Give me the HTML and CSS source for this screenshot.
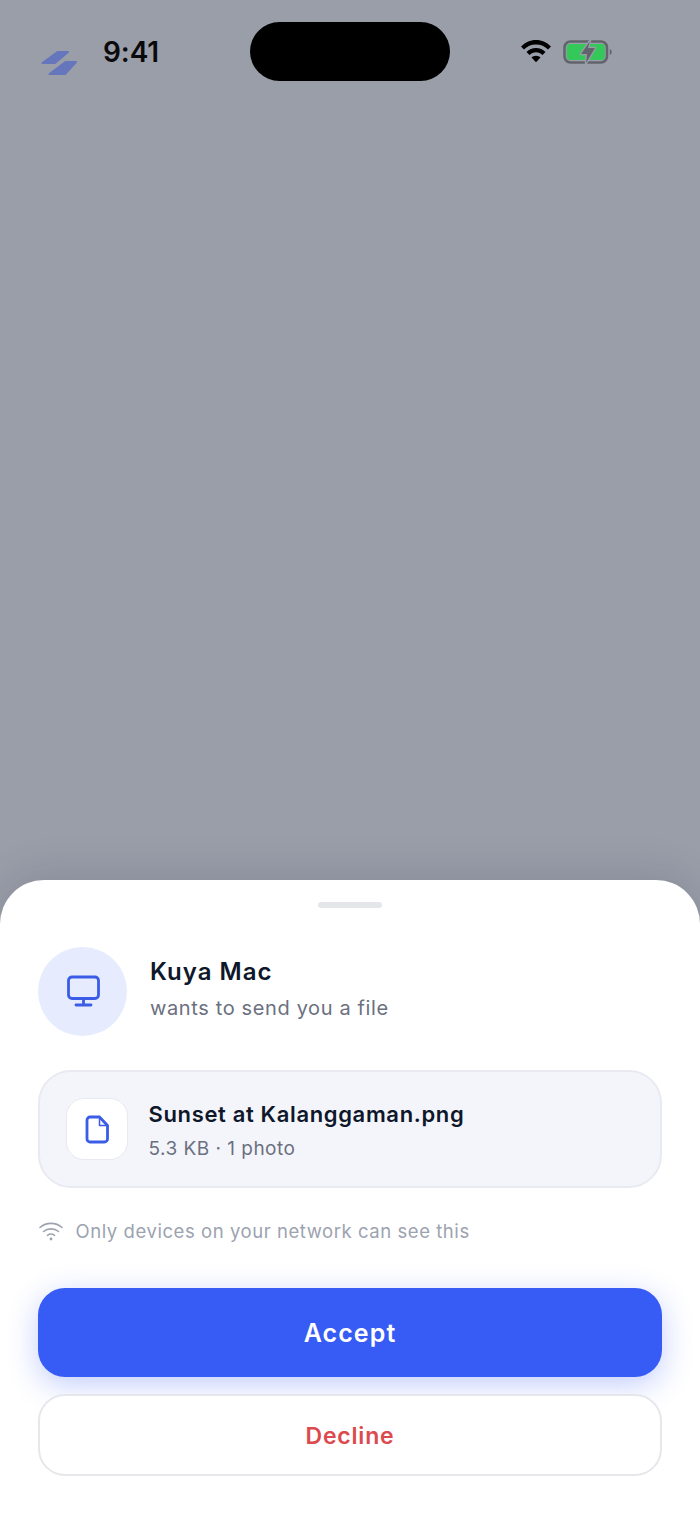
FILE: index.html
```html
<!DOCTYPE html>
<html lang="en">
<head>
<meta charset="utf-8">
<title>Incoming file</title>
<link rel="stylesheet" href="styles.css">
</head>
<body>
<div class="screen">
  <div class="backdrop">
    <div class="status">
      <div class="status-left">
        <svg class="logo" width="38" height="28" viewBox="0 0 38 28"><path class="logo-fill" d="M17.500 3H28L15 14H2.500zM25.500 13H36L25 25H9.500z"/></svg>
        <span class="time">9:41</span>
      </div>
      <div class="island"></div>
      <div class="status-right">
        <svg class="wifi" width="32" height="24" viewBox="0 0 32 24"><path d="M16 1C10 1 5 3.500 1 7.600l3 3C7 7.500 11.200 5.600 16 5.600s9 1.900 12 5l3-3C27 3.500 22 1 16 1z"/><path d="M16 9c-3.700 0-7 1.500-9.500 4l3 3c1.700-1.700 4-2.800 6.500-2.800s4.800 1.100 6.500 2.800l3-3c-2.500-2.500-5.800-4-9.500-4z"/><path d="M16 16.800c-1.800 0-3.400.7-4.500 1.800l4.500 4.600 4.500-4.600c-1.100-1.100-2.700-1.800-4.500-1.800z"/></svg>
        <svg class="battery" width="50" height="26" viewBox="0 0 50 26"><rect class="batt-shell" x="2.500" y="2.500" width="42.500" height="21" rx="6"/><rect class="batt-level" x="4.800" y="5" width="38" height="16" rx="3"/><path class="batt-cap" d="M47.800 10v6c1.300-.4 1.900-1.700 1.900-3s-.6-2.600-1.900-3z"/><path class="batt-bolt-edge" d="M28 2 19 15h6l-1 9 9-15h-7z"/><path class="batt-bolt" d="M28 2 19 15h6l-1 9 9-15h-7z"/></svg>
      </div>
    </div>
  </div>
  <section class="sheet">
    <div class="grabber"></div>
    <div class="sender">
      <div class="avatar">
        <svg width="36" height="36" viewBox="0 0 36 36"><rect class="ic" x="3.500" y="4" width="30" height="21.500" rx="3.500"/><path class="ic" d="M18.500 25.500v6M11 32h15"/></svg>
      </div>
      <div class="sender-text">
        <div class="name">Kuya Mac</div>
        <div class="sub">wants to send you a file</div>
      </div>
    </div>
    <div class="file-card">
      <div class="file-icon">
        <svg width="30" height="34" viewBox="0 0 30 34"><path class="ic" d="M8 5h9.500l8 8.500V27a3 3 0 0 1-3 3H8a3 3 0 0 1-3-3V8a3 3 0 0 1 3-3z"/><path class="ic-thin" d="M17.500 5.500v8h8"/></svg>
      </div>
      <div class="file-text">
        <div class="file-name">Sunset at Kalanggaman.png</div>
        <div class="file-meta">5.3 KB · 1 photo</div>
      </div>
    </div>
    <div class="notice">
      <svg width="26" height="20" viewBox="0 0 26 20"><path class="nw" d="M2 6.500C8 1 18 1 24 6.500M5.500 10.500c4.200-3.500 10.800-3.500 15 0M9.500 14.300c2-1.500 5-1.500 7 0"/><circle class="nd" cx="13" cy="18" r="1.400"/></svg>
      <span>Only devices on your network can see this</span>
    </div>
    <button class="btn accept">Accept</button>
    <button class="btn decline">Decline</button>
  </section>
</div>
</body>
</html>
```
FILE: styles.css
```css
* { box-sizing: border-box; }
html, body { margin: 0; padding: 0; }
body { font-family: Inter, "Liberation Sans", sans-serif; background: #fff; }
.screen { width: 700px; height: 1521px; display: flex; flex-direction: column; overflow: hidden; background: #9a9ea9; }
.backdrop { height: 880px; flex: none; }
.status { display: flex; align-items: flex-start; height: 90px; padding: 22px 88px 0 40px; }
.status-left { display: flex; width: 210px; align-items: flex-start; height: 59px; }
.logo { margin-top: 27px; flex: none; }
.logo-fill { fill: #6576bc; stroke: #6576bc; stroke-width: 2; stroke-linejoin: round; }
.time { font-size: 28px; font-weight: 600; color: #0a0a0c; letter-spacing: -0.1px; margin: 13px 0 0 25px; line-height: 34px; }
.island { width: 200px; height: 59px; background: #000; border-radius: 30px; flex: none; }
.status-right { display: flex; flex: 1; gap: 10px; padding: 17px 0 0 70px; }
.wifi { fill: #000; flex: none; }
.battery { flex: none; }
.batt-shell { fill: none; stroke: #62646b; stroke-width: 2.500; }
.batt-level { fill: #34c759; }
.batt-cap { fill: #62646b; }
.batt-bolt-edge { fill: #9a9ea9; stroke: #9a9ea9; stroke-width: 2.500; stroke-linejoin: round; }
.batt-bolt { fill: #62646b; }
.sheet { flex: 1; background: #fff; border-radius: 44px 44px 0 0; box-shadow: 0 -8px 40px rgba(15, 23, 42, 0.12); padding: 22px 38px 0; display: flex; flex-direction: column; }
.grabber { width: 64px; height: 6px; border-radius: 3px; background: #e4e6ea; align-self: center; flex: none; }
.sender { display: flex; align-items: center; gap: 23px; margin-top: 38.500px; }
.avatar { width: 89px; height: 89px; border-radius: 50%; background: #e6ecfd; display: flex; align-items: center; justify-content: center; flex: none; }
.ic { fill: none; stroke: #3a5ce6; stroke-width: 2.800; stroke-linecap: round; stroke-linejoin: round; }
.ic-thin { fill: none; stroke: #3a5ce6; stroke-width: 1.500; stroke-linejoin: round; }
.sender-text { display: flex; flex-direction: column; gap: 6px; padding-bottom: 4px; }
.name { font-size: 24px; font-weight: 600; color: #0f172a; letter-spacing: 1px; line-height: 32px; }
.sub { font-size: 20px; color: #6b7080; letter-spacing: 0.63px; line-height: 28px; }
.file-card { margin-top: 34.500px; height: 118px; border: 2px solid #e9eaf1; border-radius: 33px; background: #f4f5fb; display: flex; align-items: center; padding: 0 26px; gap: 20.500px; flex: none; }
.file-icon { width: 62px; height: 62px; border-radius: 18px; background: #fff; border: 1px solid #e9eaf1; display: flex; align-items: center; justify-content: center; flex: none; }
.file-text { display: flex; flex-direction: column; gap: 8px; padding-top: 3px; }
.file-name { font-size: 22px; font-weight: 600; color: #0f172a; letter-spacing: 0.65px; line-height: 28px; }
.file-meta { font-size: 19px; color: #6b7080; letter-spacing: 0.48px; line-height: 26px; }
.notice { display: flex; align-items: center; gap: 11.500px; margin-top: 30px; height: 26px; font-size: 18.500px; color: #9ca3af; letter-spacing: 0.56px; }
.notice svg { flex: none; }
.nw { fill: none; stroke: #9ca3af; stroke-width: 1.600; stroke-linecap: round; }
.nd { fill: #9ca3af; }
.btn { display: block; width: 100%; font-family: inherit; font-weight: 600; border-radius: 27px; flex: none; padding: 0; }
.accept { margin-top: 44px; height: 89px; background: #375cf5; color: #fff; border: none; font-size: 25px; letter-spacing: 1.1px; box-shadow: 0 8px 30px rgba(56, 93, 248, 0.3); }
.decline { margin-top: 17px; height: 82px; padding-top: 1px; background: #fff; border: 2px solid #e5e7eb; color: #dc4a4e; font-size: 23px; letter-spacing: 0.8px; }
```
